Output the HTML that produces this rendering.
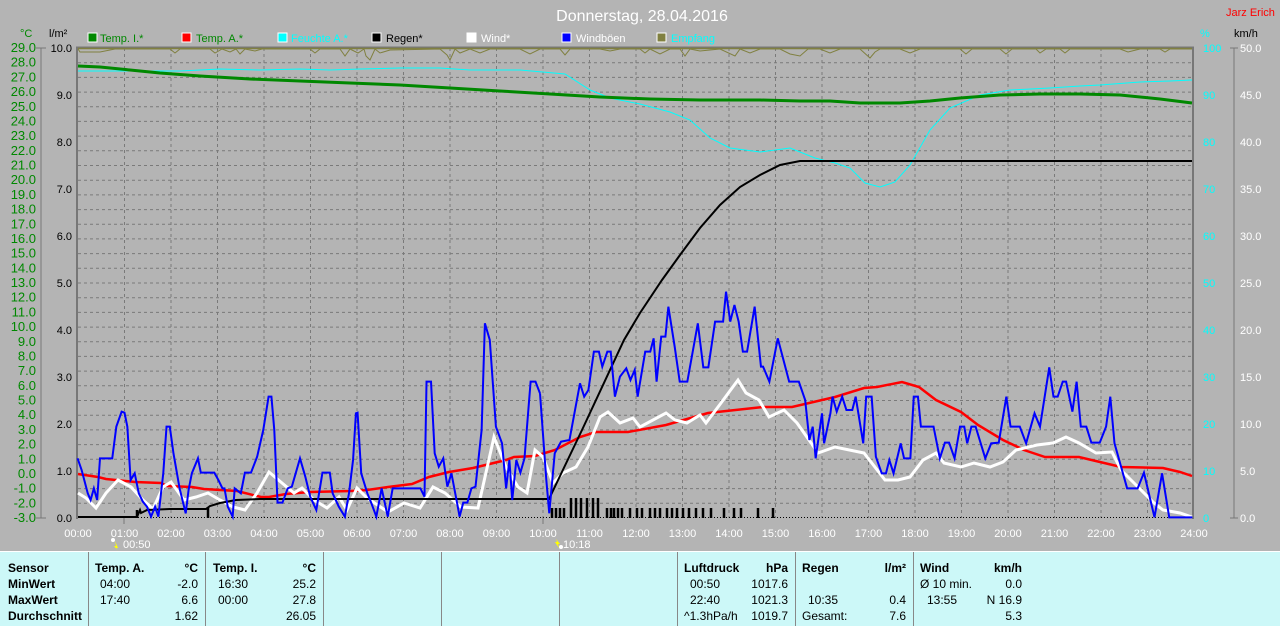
<!DOCTYPE html>
<html><head><meta charset="utf-8"><style>
html,body{margin:0;padding:0;background:#b4b4b4;width:1280px;height:625px;overflow:hidden}
svg{position:absolute;left:0;top:0}
.p{position:absolute;top:551px;left:0;width:1280px;height:74px;background:#ccf8f8;border-top:1px solid #fff;font-family:"Liberation Sans",sans-serif;font-size:12px;color:#000}
.d{position:absolute;top:0;width:1px;height:74px;background:#888}
.t{position:absolute;white-space:nowrap}
.b{font-weight:bold}
.r{text-align:right}
</style></head><body>
<svg width="1280" height="625" font-family="Liberation Sans, sans-serif">
<text x="642" y="21" fill="#fff" font-size="16" text-anchor="middle">Donnerstag, 28.04.2016</text>
<text x="1226" y="16" fill="#f00" font-size="11">Jarz Erich</text>
<text x="20" y="37" fill="#080" font-size="11">°C</text>
<text x="49" y="37" fill="#000" font-size="11">l/m²</text>
<text x="1200" y="37" fill="#0ff" font-size="11">%</text>
<text x="1234" y="37" fill="#000" font-size="11">km/h</text>
<g font-size="11">
<rect x="88" y="33" width="9" height="9" fill="#080" stroke="#fff"/><text x="100" y="42" fill="#080">Temp. I.*</text>
<rect x="182" y="33" width="9" height="9" fill="#f00" stroke="#fff"/><text x="196" y="42" fill="#080">Temp. A.*</text>
<rect x="278" y="33" width="9" height="9" fill="#0ff" stroke="#fff"/><text x="291" y="42" fill="#0ff">Feuchte A.*</text>
<rect x="372" y="33" width="9" height="9" fill="#000" stroke="#fff"/><text x="386" y="42" fill="#000">Regen*</text>
<rect x="467" y="33" width="9" height="9" fill="#fff" stroke="#fff"/><text x="481" y="42" fill="#fff">Wind*</text>
<rect x="562" y="33" width="9" height="9" fill="#00f" stroke="#fff"/><text x="576" y="42" fill="#fff">Windböen</text>
<rect x="657" y="33" width="9" height="9" fill="#808040" stroke="#fff"/><text x="671" y="42" fill="#0ff">Empfang</text>
</g>
<g stroke="#7a7a7a" stroke-dasharray="3,3" stroke-width="1">
<path d="M78 62.7H1192M78 77.4H1192M78 92.1H1192M78 106.8H1192M78 121.4H1192M78 136.1H1192M78 150.8H1192M78 165.5H1192M78 180.2H1192M78 194.9H1192M78 209.6H1192M78 224.3H1192M78 238.9H1192M78 253.6H1192M78 268.3H1192M78 283H1192M78 297.7H1192M78 312.4H1192M78 327.1H1192M78 341.8H1192M78 356.4H1192M78 371.1H1192M78 385.8H1192M78 400.5H1192M78 415.2H1192M78 429.9H1192M78 444.6H1192M78 459.3H1192M78 473.9H1192M78 488.6H1192M78 503.3H1192"/>
<path d="M124.5 48V518M171 48V518M217.5 48V518M264 48V518M310.5 48V518M357 48V518M403.5 48V518M450 48V518M496.5 48V518M543 48V518M589.5 48V518M636 48V518M682.5 48V518M729 48V518M775.5 48V518M822 48V518M868.5 48V518M915 48V518M961.5 48V518M1008 48V518M1054.5 48V518M1101 48V518M1147.5 48V518"/>
</g>
<path d="M78 517.5H1192" stroke="#000" stroke-dasharray="1,2"/>
<path d="M41 48V518M1234 48V518" stroke="#777" stroke-width="1"/>
<path d="M77 47V519M76 47.5H1194M1193 47V519" stroke="#777" stroke-width="2" fill="none"/>
<g stroke="#777"><path d="M36 48H46M36 518H46M1230 48H1238M1230 518H1238M124 518V524M543 518V524"/></g>
<g font-size="13" fill="#080" text-anchor="end">
<text x="36" y="52">29.0</text><text x="36" y="66.7">28.0</text><text x="36" y="81.4">27.0</text><text x="36" y="96.1">26.0</text><text x="36" y="110.8">25.0</text><text x="36" y="125.4">24.0</text><text x="36" y="140.1">23.0</text><text x="36" y="154.8">22.0</text><text x="36" y="169.5">21.0</text><text x="36" y="184.2">20.0</text><text x="36" y="198.9">19.0</text><text x="36" y="213.6">18.0</text><text x="36" y="228.3">17.0</text><text x="36" y="242.9">16.0</text><text x="36" y="257.6">15.0</text><text x="36" y="272.3">14.0</text><text x="36" y="287">13.0</text><text x="36" y="301.7">12.0</text><text x="36" y="316.4">11.0</text><text x="36" y="331.1">10.0</text><text x="36" y="345.8">9.0</text><text x="36" y="360.4">8.0</text><text x="36" y="375.1">7.0</text><text x="36" y="389.8">6.0</text><text x="36" y="404.5">5.0</text><text x="36" y="419.2">4.0</text><text x="36" y="433.9">3.0</text><text x="36" y="448.6">2.0</text><text x="36" y="463.3">1.0</text><text x="36" y="477.9">0.0</text><text x="36" y="492.6">-1.0</text><text x="36" y="507.3">-2.0</text><text x="36" y="522">-3.0</text>
</g>
<g font-size="11" fill="#000" text-anchor="end">
<text x="72" y="52">10.0</text><text x="72" y="99">9.0</text><text x="72" y="146">8.0</text><text x="72" y="193">7.0</text><text x="72" y="240">6.0</text><text x="72" y="287">5.0</text><text x="72" y="334">4.0</text><text x="72" y="381">3.0</text><text x="72" y="428">2.0</text><text x="72" y="475">1.0</text><text x="72" y="522">0.0</text>
</g>
<g font-size="11" fill="#0ff">
<text x="1203" y="52">100</text><text x="1203" y="99">90</text><text x="1203" y="146">80</text><text x="1203" y="193">70</text><text x="1203" y="240">60</text><text x="1203" y="287">50</text><text x="1203" y="334">40</text><text x="1203" y="381">30</text><text x="1203" y="428">20</text><text x="1203" y="475">10</text><text x="1203" y="522">0</text>
</g>
<g font-size="11" fill="#fff">
<text x="1240" y="52">50.0</text><text x="1240" y="99">45.0</text><text x="1240" y="146">40.0</text><text x="1240" y="193">35.0</text><text x="1240" y="240">30.0</text><text x="1240" y="287">25.0</text><text x="1240" y="334">20.0</text><text x="1240" y="381">15.0</text><text x="1240" y="428">10.0</text><text x="1240" y="475">5.0</text><text x="1240" y="522">0.0</text>
</g>
<g font-size="11" fill="#fff" text-anchor="middle">
<text x="78" y="537">00:00</text><text x="124.5" y="537">01:00</text><text x="171" y="537">02:00</text><text x="217.5" y="537">03:00</text><text x="264" y="537">04:00</text><text x="310.5" y="537">05:00</text><text x="357" y="537">06:00</text><text x="403.5" y="537">07:00</text><text x="450" y="537">08:00</text><text x="496.5" y="537">09:00</text><text x="543" y="537">10:00</text><text x="589.5" y="537">11:00</text><text x="636" y="537">12:00</text><text x="682.5" y="537">13:00</text><text x="729" y="537">14:00</text><text x="775.5" y="537">15:00</text><text x="822" y="537">16:00</text><text x="868.5" y="537">17:00</text><text x="915" y="537">18:00</text><text x="961.5" y="537">19:00</text><text x="1008" y="537">20:00</text><text x="1054.5" y="537">21:00</text><text x="1101" y="537">22:00</text><text x="1147.5" y="537">23:00</text><text x="1194" y="537">24:00</text>
</g>
<g font-size="11" fill="#fff"><text x="123" y="548">00:50</text><text x="563" y="548">10:18</text></g>
<path d="M115 541l3 7h-2l2 3-4-5h2z" fill="#ff0"/><circle cx="113" cy="540" r="2" fill="#fff"/>
<path d="M556 539l4 5h-2l1 4-4-6h2z" fill="#ff0"/><circle cx="561" cy="547" r="2" fill="#fff"/>
<polyline fill="none" stroke="#808040" stroke-width="1" points="78,49 80,52 90,52 100,52 115,49 130,49 170,49 175,53 180,49 200,49 210,49 215,53 222,49 230,52 236,49 240,54 245,49 255,51 262,49 300,49 310,49 315,53 320,49 340,49 345,56 350,49 358,53 364,49 366,56 370,60 375,49 380,53 390,50 440,49 447,55 450,60 455,49 460,53 470,49 480,53 490,49 520,49 530,54 540,49 560,49 565,55 570,49 600,49 610,51 620,49 640,49 645,53 650,49 660,54 670,49 680,49 685,56 690,49 700,51 720,49 735,56 740,49 750,53 760,49 780,49 790,54 800,56 808,49 820,49 830,53 840,49 860,49 870,58 875,52 880,49 900,49 910,53 920,49 960,49 966,54 972,49 1000,49 1006,54 1012,49 1036,49 1040,53 1046,49 1060,49 1065,53 1070,49 1120,49 1128,52 1140,49 1160,49 1165,52 1170,49 1192,49"/>
<path d="M78 48.5H1192" stroke="#808040" stroke-width="1.5"/>
<g stroke="#000" stroke-width="2.5"><path d="M552 518V508M556 518V508M560 518V508M564 518V508M571 518V498M576 518V498M581 518V498M587 518V498M593 518V498M598 518V498M607 518V508M611 518V508M614 518V508M618 518V508M622 518V508M630 518V508M637 518V508M642 518V508M650 518V508M655 518V508M660 518V508M667 518V508M672 518V508M677 518V508M683 518V508M689 518V508M696 518V508M703 518V508M711 518V508M724 518V508M734 518V508M741 518V508M758 518V508M773 518V508M137 518V510M208 518V507"/></g>
<polyline fill="none" stroke="#0ff" stroke-width="1" points="78,71 180,71 220,69 260,70 300,69 330,70 360,69 400,68 440,68 470,70 520,70 565,74 590,90 610,98 640,104 670,112 690,120 710,138 730,148 760,152 790,148 815,158 835,163 850,168 865,183 880,187 895,182 910,165 930,130 950,108 980,95 1010,90 1050,88 1080,86 1100,85 1140,82 1170,81 1192,80"/>
<polyline fill="none" stroke="#080" stroke-width="3" points="78,66 100,67 130,70 160,73 200,76 250,79 300,81 350,83 400,85 450,88 500,91 550,94 600,97 650,99 700,100 760,100 800,101 830,101 860,103 900,103 930,101 960,98 1000,95 1040,94 1080,94 1120,95 1160,99 1192,103"/>
<polyline fill="none" stroke="#f00" stroke-width="2.5" points="78,474 98,477 106,479 135,482 161,483 167,486 192,487 204,489 237,491 261,497 269,497 286,494 310,492 351,491 367,490 388,487 412,484 429,477 449,472 473,468 506,460 514,457 535,456 555,450 580,437 596,432 628,432 666,425 708,413 763,407 792,407 835,397 864,388 877,387 902,382 919,387 936,400 961,412 978,425 1003,440 1024,450 1045,457 1079,457 1100,462 1121,467 1163,468 1180,472 1192,476"/>
<polyline fill="none" stroke="#fff" stroke-width="3" points="78,493 86,498 96,508 106,493 118,480 131,487 143,500 153,509 163,487 171,482 184,500 196,497 208,493 220,500 233,507 245,510 257,493 269,472 282,483 294,493 302,488 314,500 327,508 339,497 347,510 357,488 367,498 388,512 404,503 420,508 433,487 445,493 461,507 478,508 494,437 506,467 518,487 527,493 535,450 543,457 553,483 563,473 576,467 588,447 600,417 608,412 620,423 633,418 640,427 666,413 675,420 687,423 700,415 706,423 721,403 738,380 746,393 759,400 769,417 784,410 797,423 809,440 818,453 835,447 864,453 885,480 898,480 910,477 923,460 936,453 944,463 961,467 974,463 990,467 1003,462 1016,450 1037,445 1053,443 1066,437 1079,443 1096,453 1112,452 1121,470 1138,487 1154,503 1163,510 1180,513 1192,517"/>
<polyline fill="none" stroke="#000" stroke-width="2" points="78,517 137,517 140,510 141,513 147,510 170,509 206,509 210,506 220,503 236,500 260,499 549,499 582,430 624,340 640,313 662,280 680,255 700,228 720,205 740,187 760,175 780,165 800,161 1192,161"/>
<g transform="translate(0,280) scale(0.40816,0.33333)"><polyline fill="none" stroke="#00f" stroke-width="2" vector-effect="non-scaling-stroke" points="190,535 200,570 215,640 222,660 230,625 238,660 245,535 275,535 285,440 298,395 305,398 312,440 320,600 330,580 340,640 350,665 360,680 370,710 380,680 388,710 400,580 408,440 416,440 425,520 440,625 455,700 462,630 470,580 485,535 492,578 525,578 535,600 545,625 550,625 558,680 570,710 575,625 590,640 600,578 615,578 630,530 645,450 658,350 665,350 672,450 680,668 692,668 705,625 715,620 735,535 748,590 760,650 775,690 790,578 808,578 815,640 830,680 845,710 855,640 865,540 872,400 876,398 885,580 900,640 910,670 922,710 935,625 950,710 962,625 1030,625 1040,650 1045,305 1056,305 1065,520 1075,560 1086,535 1096,620 1106,580 1120,670 1126,710 1135,668 1145,668 1155,625 1165,620 1180,450 1188,130 1200,180 1215,440 1230,490 1240,625 1248,540 1255,660 1265,540 1275,578 1285,535 1300,305 1312,305 1323,340"/></g>
<g transform="translate(540,280) scale(0.42088,0.33333)"><polyline fill="none" stroke="#00f" stroke-width="2" vector-effect="non-scaling-stroke" points="0,340 15,600 22,700 35,520 50,485 70,480 95,310 105,350 115,330 128,215 140,215 148,260 160,215 168,215 178,350 190,290 205,265 215,300 225,270 232,350 250,215 262,215 270,175 277,305 288,170 298,170 305,80 320,200 332,305 350,305 375,130 388,262 400,262 416,125 435,125 442,35 452,125 462,75 472,125 482,215 492,215 510,80 525,260 530,260 545,305 565,175 592,305 615,305 630,360 640,480 648,440 655,535 665,445 670,400 675,490 690,400 695,350 705,395 718,350 728,390 742,390 750,350 768,490 775,350 788,350 798,530 812,580 822,580 830,540 840,580 857,490 865,535 880,535 888,350 898,350 905,440 935,440 950,535 962,488 972,488 985,535 998,440 1008,440 1015,490 1025,440 1035,440 1058,535 1072,490 1090,488 1108,350 1118,440 1140,440 1155,490 1175,400 1188,440 1210,262 1220,350 1230,350 1242,305 1250,305 1265,395 1275,305 1285,440 1298,440 1310,488 1330,488 1345,440 1355,350 1365,490 1395,625 1420,625 1435,578 1460,712 1478,580 1495,712 1550,712"/></g>
</svg>
<div class="p">
<div class="d" style="left:88px"></div><div class="d" style="left:205px"></div><div class="d" style="left:323px"></div><div class="d" style="left:441px"></div><div class="d" style="left:559px"></div><div class="d" style="left:677px"></div><div class="d" style="left:795px"></div><div class="d" style="left:913px"></div>
<div class="t b" style="left:8px;top:9px">Sensor</div>
<div class="t b" style="left:8px;top:25px">MinWert</div>
<div class="t b" style="left:8px;top:41px">MaxWert</div>
<div class="t b" style="left:8px;top:57px">Durchschnitt</div>
<div class="t b" style="left:95px;top:9px">Temp. A.</div><div class="t b r" style="right:1082px;top:9px">°C</div>
<div class="t" style="left:100px;top:25px">04:00</div><div class="t r" style="right:1082px;top:25px">-2.0</div>
<div class="t" style="left:100px;top:41px">17:40</div><div class="t r" style="right:1082px;top:41px">6.6</div>
<div class="t r" style="right:1082px;top:57px">1.62</div>
<div class="t b" style="left:213px;top:9px">Temp. I.</div><div class="t b r" style="right:964px;top:9px">°C</div>
<div class="t" style="left:218px;top:25px">16:30</div><div class="t r" style="right:964px;top:25px">25.2</div>
<div class="t" style="left:218px;top:41px">00:00</div><div class="t r" style="right:964px;top:41px">27.8</div>
<div class="t r" style="right:964px;top:57px">26.05</div>
<div class="t b" style="left:684px;top:9px">Luftdruck</div><div class="t b r" style="right:492px;top:9px">hPa</div>
<div class="t" style="left:690px;top:25px">00:50</div><div class="t r" style="right:492px;top:25px">1017.6</div>
<div class="t" style="left:690px;top:41px">22:40</div><div class="t r" style="right:492px;top:41px">1021.3</div>
<div class="t" style="left:684px;top:57px">^1.3hPa/h</div><div class="t r" style="right:492px;top:57px">1019.7</div>
<div class="t b" style="left:802px;top:9px">Regen</div><div class="t b r" style="right:374px;top:9px">l/m²</div>
<div class="t" style="left:808px;top:41px">10:35</div><div class="t r" style="right:374px;top:41px">0.4</div>
<div class="t" style="left:802px;top:57px">Gesamt:</div><div class="t r" style="right:374px;top:57px">7.6</div>
<div class="t b" style="left:920px;top:9px">Wind</div><div class="t b r" style="right:258px;top:9px">km/h</div>
<div class="t" style="left:920px;top:25px">Ø 10 min.</div><div class="t r" style="right:258px;top:25px">0.0</div>
<div class="t" style="left:927px;top:41px">13:55</div><div class="t r" style="right:258px;top:41px">N 16.9</div>
<div class="t r" style="right:258px;top:57px">5.3</div>
</div>
</body></html>
